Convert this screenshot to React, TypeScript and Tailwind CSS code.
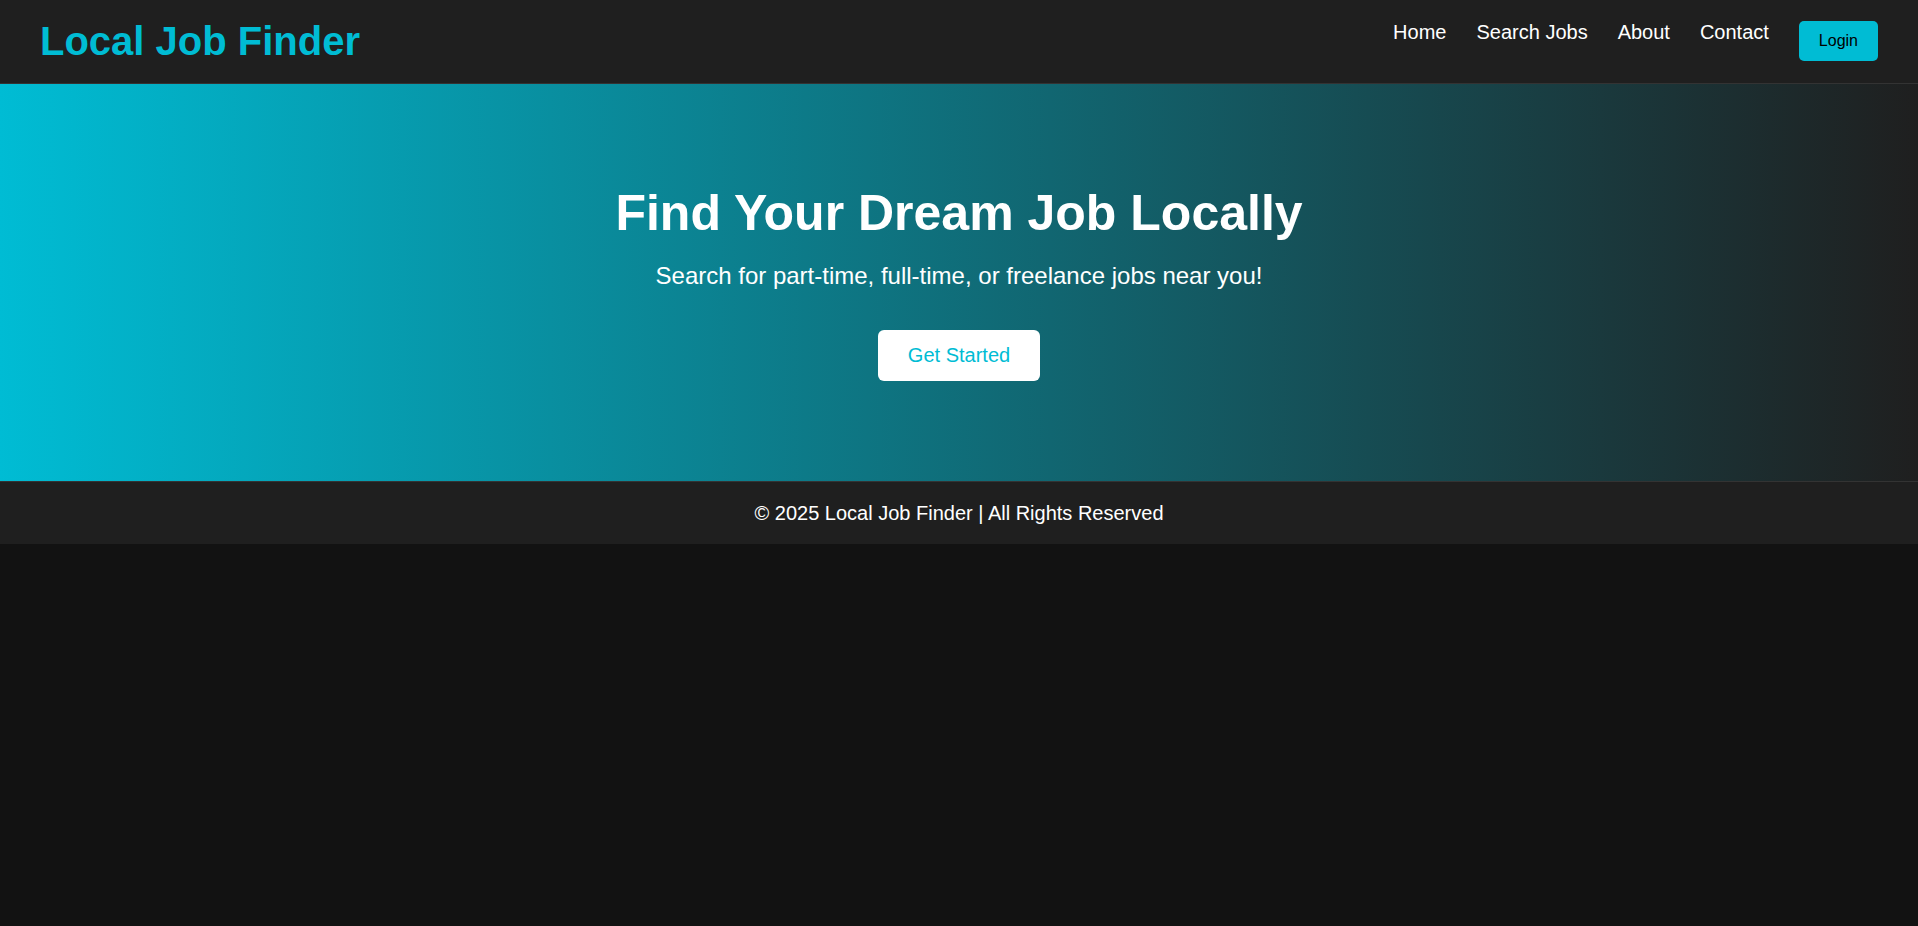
import React from "react";

export default function App() {
  const font = { fontFamily: '"Liberation Sans", Arial, sans-serif' };
  return (
    <div className="min-h-[926px] bg-[#121212] text-white" style={font}>
      <header className="flex h-[84px] items-start justify-between border-b border-[#333333] bg-[#1f1f1f] px-10">
        <div className="mt-[18px] text-[40px] font-bold leading-[46px] text-[#00bcd4]">
          Local Job Finder
        </div>
        <nav className="mt-[21px] flex items-start gap-[30px]">
          <a className="text-[20px] leading-[23px] text-white">Home</a>
          <a className="text-[20px] leading-[23px] text-white">Search Jobs</a>
          <a className="text-[20px] leading-[23px] text-white">About</a>
          <a className="text-[20px] leading-[23px] text-white">Contact</a>
          <button className="h-[40px] rounded-[5px] bg-[#00bcd4] px-5 text-[16px] leading-[18px] text-black">
            Login
          </button>
        </nav>
      </header>
      <section className="flex h-[397px] flex-col items-center bg-[linear-gradient(to_right,#00bcd4,#1f1f1f)] pt-[101px] text-center">
        <h1 className="text-[50px] font-bold leading-[57px] text-white">
          Find Your Dream Job Locally
        </h1>
        <p className="mt-[20px] text-[24px] leading-[28px] text-white">
          Search for part-time, full-time, or freelance jobs near you!
        </p>
        <button className="mt-[40px] h-[51px] rounded-[6px] bg-white px-[30px] text-[20px] leading-[23px] text-[#00bcd4]">
          Get Started
        </button>
      </section>
      <footer className="flex h-[63px] items-center justify-center border-t border-[#333333] bg-[#1f1f1f] text-[20px] leading-[23px] text-white">
        © 2025 Local Job Finder | All Rights Reserved
      </footer>
    </div>
  );
}
